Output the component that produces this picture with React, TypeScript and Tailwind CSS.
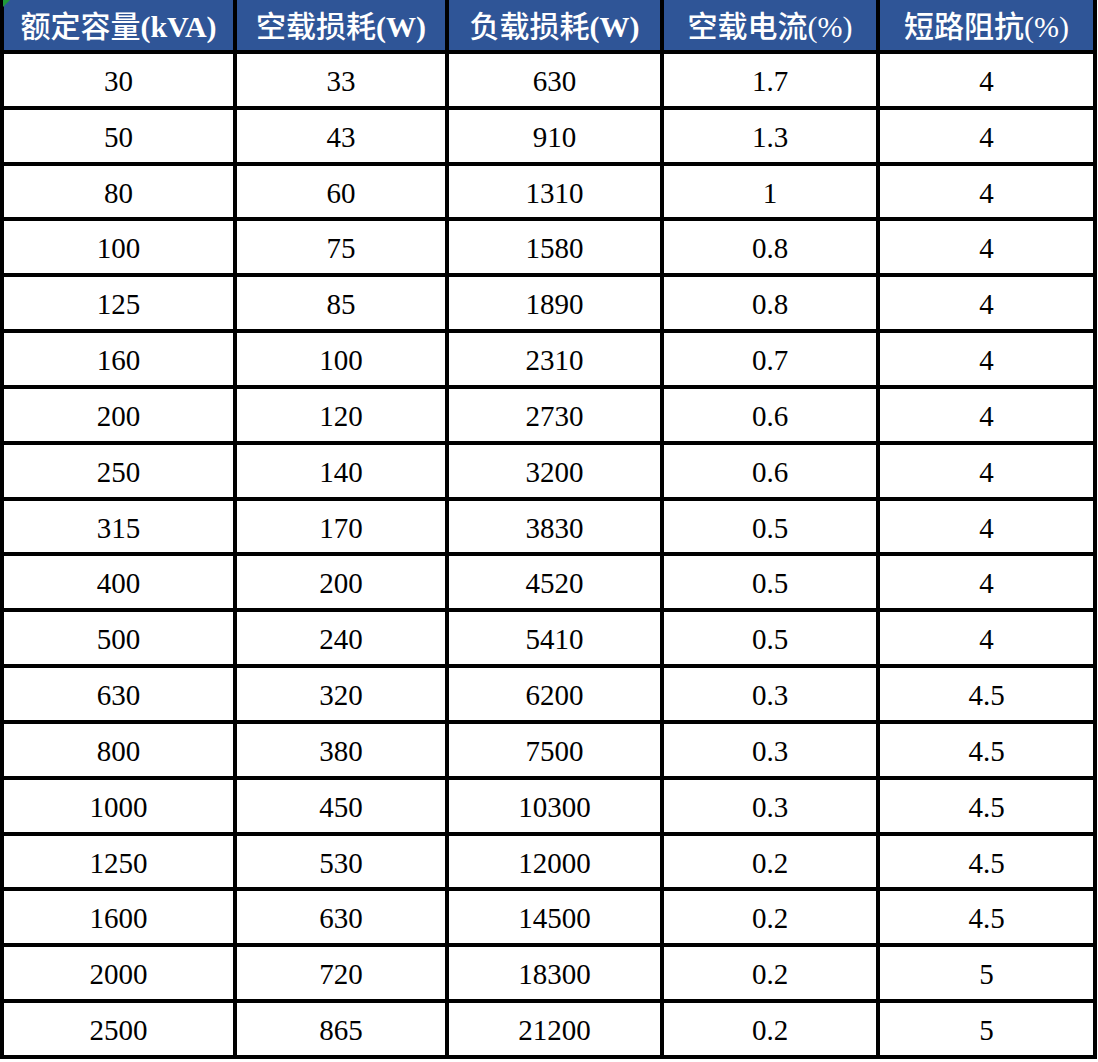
import React from "react";

// column widths, right border included
const COLS = ["w-[233px]", "w-[212px]", "w-[215px]", "w-[216px]", "w-[217px]"];

const HEADERS: [string, string, boolean][] = [
  ["额定容量", "(kVA)", true],
  ["空载损耗", "(W)", true],
  ["负载损耗", "(W)", true],
  ["空载电流", "(%)", false],
  ["短路阻抗", "(%)", false],
];

const ROWS: string[][] = [
  ["30", "33", "630", "1.7", "4"],
  ["50", "43", "910", "1.3", "4"],
  ["80", "60", "1310", "1", "4"],
  ["100", "75", "1580", "0.8", "4"],
  ["125", "85", "1890", "0.8", "4"],
  ["160", "100", "2310", "0.7", "4"],
  ["200", "120", "2730", "0.6", "4"],
  ["250", "140", "3200", "0.6", "4"],
  ["315", "170", "3830", "0.5", "4"],
  ["400", "200", "4520", "0.5", "4"],
  ["500", "240", "5410", "0.5", "4"],
  ["630", "320", "6200", "0.3", "4.5"],
  ["800", "380", "7500", "0.3", "4.5"],
  ["1000", "450", "10300", "0.3", "4.5"],
  ["1250", "530", "12000", "0.2", "4.5"],
  ["1600", "630", "14500", "0.2", "4.5"],
  ["2000", "720", "18300", "0.2", "5"],
  ["2500", "865", "21200", "0.2", "5"],
];

const font = "font-['Liberation_Serif','Noto_Sans_CJK_SC',serif]";

export default function App() {
  return (
    <div className={`w-[1098px] h-[1062px] bg-white ${font} relative`}>
      {/* excel comment marker */}
      <div className="absolute left-[3px] top-0 w-0 h-0 border-t-[7px] border-t-[#1f9a3a] border-r-[7px] border-r-transparent" />
      <div className="w-[1097px] border-l-4 border-black">
        {/* header */}
        <div className="flex h-[54px] bg-[#2f5597] border-b-4 border-black">
          {HEADERS.map(([zh, unit, bold], i) => (
            <div
              key={i}
              className={`${COLS[i]} shrink-0 flex items-center justify-center pt-[4px] text-white text-[30px] font-medium leading-none border-r-4 border-black whitespace-nowrap`}
            >
              {zh}
              <span className={bold ? "font-bold" : ""}>{unit}</span>
            </div>
          ))}
        </div>
        {/* body */}
        {ROWS.map((row, r) => (
          <div key={r} className="flex h-[55.83px] border-b-4 border-black">
            {row.map((v, c) => (
              <div
                key={c}
                className={`${COLS[c]} shrink-0 flex items-center justify-center pt-[3px] text-[29px] text-black leading-none border-r-4 border-black`}
              >
                {v}
              </div>
            ))}
          </div>
        ))}
      </div>
    </div>
  );
}
